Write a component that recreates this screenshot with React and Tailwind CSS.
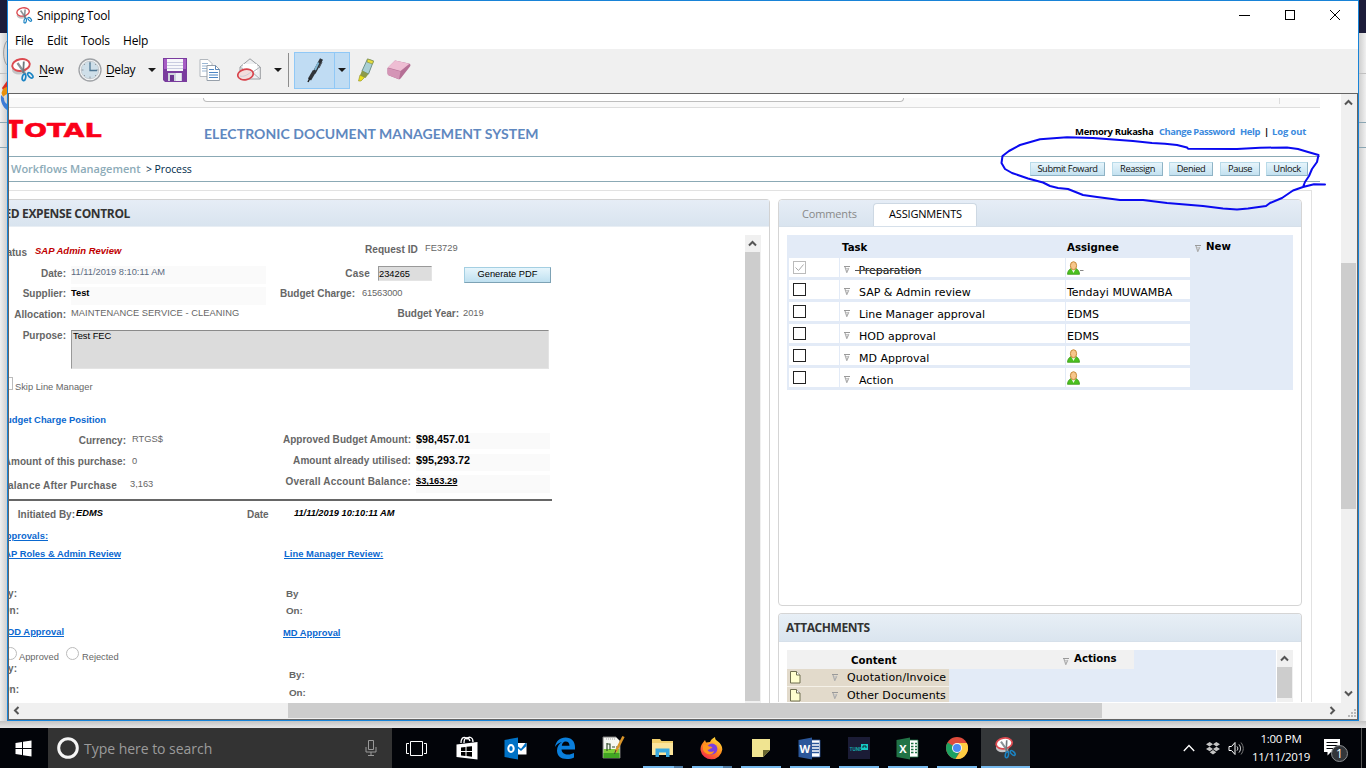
import React from "react";

const SEGOE = "font-['Open_Sans','Noto_Sans',sans-serif]";
const VERDANA = "font-['DejaVu_Sans',sans-serif]";

/* One line of text, 12px tall */
function T({ className = "", children }) {
  return <span className={`block h-3 shrink-0 whitespace-nowrap leading-3 ${className}`}>{children}</span>;
}

/* Right-aligned form label; overflows to the left */
function Label({ className = "", children }) {
  return (
    <span className={`flex h-3 shrink-0 justify-end whitespace-nowrap text-[10px] font-bold leading-3 text-[#666] ${className}`}>
      <span>{children}</span>
    </span>
  );
}

function LinkText({ className = "", children }) {
  return (
    <span className={`flex h-3 shrink-0 whitespace-nowrap text-[9.4px] font-bold leading-3 text-[#0a68d0] ${className}`}>
      <span>{children}</span>
    </span>
  );
}

function ScissorsIcon({ size, className = "" }) {
  return (
    <svg width={size} height={size} viewBox="0 0 24 24" fill="none" className={className}>
      <ellipse cx="8" cy="12" rx="7" ry="4.500" fill="#c4c4c6" />
      <ellipse cx="10" cy="7" rx="8.800" ry="5.800" fill="#fff" stroke="#dc4a50" strokeWidth="1.900" transform="rotate(-10 10 7)" />
      <path d="M6.500 5l8 11.500" stroke="#8b9297" strokeWidth="2.200" />
      <path d="M12.800 3.500L12.200 15" stroke="#6f767b" strokeWidth="1.800" />
      <ellipse cx="13" cy="19.400" rx="1.700" ry="3.300" stroke="#1b84c4" strokeWidth="1.700" transform="rotate(12 13 19.400)" />
      <ellipse cx="19.300" cy="17.400" rx="1.700" ry="3.300" stroke="#1b84c4" strokeWidth="1.700" transform="rotate(-45 19.300 17.400)" />
    </svg>
  );
}

function DropArrow({ className = "" }) {
  return (
    <svg width="8" height="4" viewBox="0 0 8 4" className={`shrink-0 ${className}`}>
      <path d="M0 0h8L4 4z" fill="#1a1a1a" />
    </svg>
  );
}

function TitleBar() {
  return (
    <div className="flex h-[29px] shrink-0 items-center bg-white">
      <ScissorsIcon size={17} className="ml-2" />
      <span className="ml-1 text-[12px] leading-4 tracking-[-0.2px] text-black">Snipping Tool</span>
      <svg width="112" height="16" viewBox="0 0 112 16" className="mb-px ml-auto mr-[13px]" fill="none" stroke="#000" shapeRendering="crispEdges">
        <path d="M6 8.500h11M52.500 3.500h9v9h-9z" />
        <path d="M97 3l10 10M107 3L97 13" shapeRendering="auto" />
      </svg>
    </div>
  );
}

function MenuBar() {
  return (
    <div className="flex h-[19px] shrink-0 bg-white pl-[7px] text-[12px] leading-[22px] tracking-[-0.2px] text-black">
      <span className="w-8">File</span>
      <span className="w-[34px]">Edit</span>
      <span className="w-[42px]">Tools</span>
      <span>Help</span>
    </div>
  );
}

function ToolBar() {
  return (
    <div className="flex h-[44px] shrink-0 items-center bg-[#f0f0f0] pb-[2px] text-[12px] leading-4 tracking-[-0.2px] text-black">
      <div className="flex w-[70px] items-center pl-[3px]">
        <ScissorsIcon size={24} />
        <span className="ml-1"><u className="underline-offset-2">N</u>ew</span>
      </div>
      <div className="flex w-[63px] items-center">
        <svg width="24" height="24" viewBox="0 0 24 24" fill="none">
          <circle cx="12" cy="12" r="11" fill="#f4f5f6" stroke="#9fa2a6" strokeWidth="1.300" />
          <circle cx="12" cy="12" r="8.800" fill="#cfdfe9" stroke="#c2c7cc" strokeWidth=".8" />
          <path d="M12 3.500v2M12 18.500v2M3.500 12h2M18.500 12h2M6 6l1 1M18 6l-1 1M6 18l1-1M18 18l-1-1" stroke="#8a939b" strokeWidth=".9" />
          <path d="M12 4.500v8h7" stroke="#4f7794" strokeWidth="1.300" />
        </svg>
        <span className="ml-1 tracking-[-0.4px]"><u className="underline-offset-2">D</u>elay</span>
      </div>
      <DropArrow className="ml-[7px]" />
      <svg width="24" height="24" viewBox="0 0 24 24" className="ml-[7px] shrink-0">
        <path d="M0 0h24v24H2l-2-2z" fill="#7a3c9e" />
        <path d="M1 1h22v10H1z" fill="#a65cc4" />
        <path d="M4 1h16v12H4z" fill="#f7f7fb" />
        <path d="M4 4.500h16M4 7.500h16M4 10.500h16" stroke="#c9cbe0" />
        <path d="M5 15h14v8H5z" fill="#cfd3dc" />
        <path d="M7 17h4v6H7z" fill="#6b3590" />
        <path d="M13 15h5v8h-5z" fill="#eef0f5" />
      </svg>
      <svg width="22" height="22" viewBox="0 0 22 22" className="ml-[12px] shrink-0" fill="none">
        <path d="M1 .5h8l4 4v13H1z" fill="#fff" stroke="#b3b8be" />
        <path d="M3 4.500h6M3 7h6M3 9.500h6M3 12h5" stroke="#9cb7d4" />
        <path d="M8 6.500h8.500l4 4v11H8z" fill="#fff" stroke="#97a0aa" />
        <path d="M16.500 6.500v4h4" stroke="#5b87b8" />
        <path d="M10 10.500h5M10 13.500h9M10 16h9M10 18.500h9" stroke="#4d86c4" />
      </svg>
      <svg width="24" height="24" viewBox="0 0 24 24" className="ml-[16px] shrink-0" fill="none">
        <path d="M3 9L13 .8 23.300 9v12H3z" fill="#eef0f2" stroke="#9a9da1" />
        <path d="M6 6h14v8H6z" fill="#fff" />
        <path d="M3 9l10 7 10-7M23 21l-8-7" stroke="#a9adb2" />
        <ellipse cx="8.500" cy="16.500" rx="7.800" ry="5.300" fill="#f3dcdc" stroke="#d8434b" strokeWidth="1.700" transform="rotate(-12 8.500 16.500)" />
        <path d="M3 18c3 1 7-.5 11-4" stroke="#c9cdd6" />
      </svg>
      <DropArrow className="ml-[13px]" />
      <div className="ml-[6px] h-[34px] w-px shrink-0 bg-[#8d8d8d]" />
      <div className="ml-[5px] flex h-[37px] w-14 shrink-0 border border-[#90c8f6] bg-[#c0dcf3]">
        <div className="flex w-10 items-center justify-center border-r border-[#90c8f6]">
          <svg width="18" height="26" viewBox="0 0 18 26" fill="none">
            <path d="M15.500 2L8 16" stroke="#2b3036" strokeWidth="3.400" />
            <path d="M12.500 5.500L9 13" stroke="#7fb3cf" strokeWidth="2" />
            <path d="M8.500 14L3.500 22.500" stroke="#30353a" strokeWidth="3.600" />
            <path d="M4 21l-2 4" stroke="#222" strokeWidth="1.500" />
            <path d="M16 5l-3 6" stroke="#45494d" />
          </svg>
        </div>
        <div className="flex flex-1 items-center justify-center"><DropArrow /></div>
      </div>
      <svg width="18" height="26" viewBox="0 0 18 26" className="ml-[7px] shrink-0" fill="none">
        <path d="M10.500 2L16.500 4l-5 13L5 14z" fill="#a9cfd4" stroke="#6d918b" />
        <path d="M10.500 2L16.500 4l-1 3-5.500-2z" fill="#e7de3d" stroke="#8f9a4c" strokeWidth=".8" />
        <path d="M5 13.500l6.500 3.500-3 4-5.500-2.500z" fill="#8c9b4a" />
        <path d="M3 18l4.500 2.500L4 24H1.500z" fill="#e9e11d" stroke="#8d8a22" strokeWidth=".6" />
      </svg>
      <svg width="24" height="20" viewBox="0 0 24 20" className="ml-[12px] shrink-0">
        <path d="M8 .5L22 3.500c1.500.5 2 1.500 1 3L14 18c-1 1.500-2 1.500-3 1L2 15.500C.8 15 .5 14 .5 12.500V8z" fill="#b56f95" />
        <path d="M8 .5L22.500 3.800 13.500 11 .8 7.500z" fill="#eebdd3" />
        <path d="M.5 8l13 3.500-1.500 7.800L1.500 15.200C.5 14.500.5 13 .5 12z" fill="#d495b6" />
      </svg>
    </div>
  );
}

function Chevron({ dir = "up", className = "" }) {
  const d = { up: "M1 6.500l3.500-3.500L8 6.500", down: "M1 2.500L4.500 6 8 2.500", left: "M6.500 1L3 4.500 6.500 8", right: "M2.500 1L6 4.500 2.500 8" }[dir];
  return (
    <svg width="9" height="9" viewBox="0 0 9 9" className={`shrink-0 ${className}`} fill="none">
      <path d={d} stroke="#555" strokeWidth="2" />
    </svg>
  );
}

function PageButton({ className = "", children }) {
  return (
    <span className={`flex h-[14px] shrink-0 items-center justify-center whitespace-nowrap border border-[#b9dbe9] border-b-[#8fb3c5] border-r-[#8fb3c5] bg-gradient-to-b from-[#e6f4fb] to-[#c3e1f0] text-[9.300px] leading-3 tracking-[-0.4px] text-[#111] ${className}`}>
      {children}
    </span>
  );
}

function Header() {
  return (
    <>
      <div className="mt-1 flex h-[10px] w-[1311px] shrink-0 border-b border-[#ddd] bg-[#f9f9f9]">
        <div className="ml-[194px] h-1 w-[701px] rounded-b-sm border-x border-b border-[#bdbdbd] bg-white" />
        <div className="ml-[375px] h-[6px] w-px bg-[#ddd]" />
      </div>
      <div className={`flex h-[49px] w-[1311px] shrink-0 border-b border-[#8ba9b5] ${SEGOE}`}>
        <div className="flex h-8 w-[195px] overflow-hidden font-['DejaVu_Sans',sans-serif] font-bold text-[#fa0019] [-webkit-text-stroke:0.5px_#fa0019]">
          <span className="-ml-[3px] mt-[9px] w-[18px] text-[25px] leading-[26px]">T</span>
          <span className="mt-[11px] origin-left scale-x-[1.38] text-[19.700px] leading-[24px]">OTAL</span>
        </div>
        <span className="mt-[18px] whitespace-nowrap font-['Lato',sans-serif] text-[14px] font-bold leading-[16px] tracking-[0.07px] text-[#5f88c0]">
          ELECTRONIC DOCUMENT MANAGEMENT SYSTEM
        </span>
        <div className="ml-auto mr-[14px] flex text-[9.400px] font-bold tracking-[-0.32px] text-[#3b8ade]">
          <T className="mt-[18px] w-[84px] text-[9.500px] text-black">Memory Rukasha</T>
          <T className="mt-[18px] w-[81px] tracking-[-0.42px]">Change Password</T>
          <T className="mt-[18px] w-[24px]">Help</T>
          <T className="mt-[18px] w-[8px] text-black">|</T>
          <T className="mt-[18px] w-[34px] tracking-[-0.1px]">Log out</T>
        </div>
      </div>
      <div className={`flex h-[25px] w-[1311px] shrink-0 items-center border-b border-[#8ba9b5] ${SEGOE}`}>
        <T className="ml-[2px] w-[135px] text-[11px] font-semibold text-[#8cabb8]">Workflows Management</T>
        <T className="text-[10.500px] tracking-[-0.1px] text-[#002a4a]">&gt; Process</T>
        <div className="ml-auto mr-[12px] flex">
          <PageButton className="mr-[7px] w-[75px]">Submit Foward</PageButton>
          <PageButton className="mr-[6px] w-[51px]">Reassign</PageButton>
          <PageButton className="mr-[7px] w-[44px]">Denied</PageButton>
          <PageButton className="mr-[6px] w-[40px]">Pause</PageButton>
          <PageButton className="w-[42px]">Unlock</PageButton>
        </div>
      </div>
    </>
  );
}

function ExpenseForm() {
  const link = "underline underline-offset-1";
  return (
    <div className="flex w-[736px] flex-col overflow-hidden pt-[14px] font-['Liberation_Sans',Arial,sans-serif] text-[9.300px] text-[#666]">
      <div className="flex h-[25px] shrink-0">
        <Label className="mt-[6px] w-[18px]">Status</Label>
        <T className="ml-2 mt-[4px] w-[330px] text-[9.500px] font-bold italic text-[#c00000]">SAP Admin Review</T>
        <T className="mt-[3px] w-[60px] text-[10.100px] font-bold">Request ID</T>
        <T className="mt-[1px]">FE3729</T>
      </div>
      <div className="flex h-[21px] shrink-0">
        <Label className="mt-[2px] w-[57px]">Date:</Label>
        <div className="ml-[5px] h-[18px] w-[195px] bg-[#fafafa]"><T className="text-[#5d6b80]">11/11/2019 8:10:11 AM</T></div>
        <Label className="mt-[2px] w-[104px] tracking-[0.2px]">Case</Label>
        <div className="ml-2 h-[15px] w-[54px] border border-[#e4e4e4] border-l-[#999] border-t-[#999] bg-[#ddd]"><T className="mt-px text-black">234265</T></div>
        <span className="ml-8 mt-px flex h-4 w-[87px] items-center justify-center whitespace-nowrap border border-[#a4cfe2] border-b-[#7da2b5] border-r-[#7da2b5] bg-gradient-to-b from-[#e6f5fc] to-[#bfe0f0] text-[9.300px] text-black">Generate PDF</span>
      </div>
      <div className="flex h-5 shrink-0">
        <Label className="mt-px w-[57px]">Supplier:</Label>
        <div className="ml-[5px] h-[18px] w-[195px] bg-[#fafafa]"><T className="font-bold text-black">Test</T></div>
        <Label className="mt-px w-[89px]">Budget Charge:</Label>
        <T className="ml-[7px] tracking-[-0.13px]">61563000</T>
      </div>
      <div className="flex h-[23px] shrink-0">
        <Label className="mt-[2px] w-[57px]">Allocation:</Label>
        <T className="ml-[5px] w-[198px] tracking-[0.05px]">MAINTENANCE SERVICE - CLEANING</T>
        <Label className="mt-px w-[190px]">Budget Year:</Label>
        <T className="ml-1">2019</T>
      </div>
      <div className="flex h-[47px] shrink-0">
        <Label className="w-[57px]">Purpose:</Label>
        <div className="ml-[5px] h-[39px] w-[478px] border border-[#e4e4e4] border-l-[#999] border-t-[#8a8a8a] bg-[#dcdcdc] pl-px text-black"><T className="-mt-px">Test FEC</T></div>
      </div>
      <div className="flex h-[35px] shrink-0">
        <div className="h-[13px] w-[4px] border border-l-0 border-[#bbb]" />
        <T className="ml-[2px] mt-[4px]">Skip Line Manager</T>
      </div>
      <div className="flex h-[21px] shrink-0">
        <LinkText className="mt-[2px] w-[97px] justify-end">Budget Charge Position</LinkText>
      </div>
      <div className="flex h-[21px] shrink-0">
        <Label className="mt-[2px] w-[117px]">Currency:</Label>
        <T className="ml-[6px] w-[150px]">RTGS$</T>
        <Label className="mt-px w-[129px] tracking-[0.03px]">Approved Budget Amount:</Label>
        <div className="ml-[5px] h-4 w-[134px] bg-[#fafafa]"><T className="text-[10.800px] font-bold text-black">$98,457.01</T></div>
      </div>
      <div className="flex h-[21px] shrink-0">
        <Label className="mt-[2px] w-[117px] tracking-[0.05px]">Amount of this purchase:</Label>
        <T className="ml-[6px] mt-px w-[150px]">0</T>
        <Label className="mt-px w-[129px] tracking-[0.05px]">Amount already utilised:</Label>
        <div className="ml-[5px] h-[17px] w-[134px] bg-[#fafafa]"><T className="text-[10.800px] font-bold text-black">$95,293.72</T></div>
      </div>
      <div className="flex h-6 shrink-0">
        <Label className="mt-[5px] w-[108px] tracking-[0.2px]">Balance After Purchase</Label>
        <T className="ml-[13px] mt-[3px] w-[152px]">3,163</T>
        <Label className="mt-px w-[129px] tracking-[0.2px]">Overall Account Balance:</Label>
        <div className="ml-[5px] h-[18px] w-[134px] bg-[#fafafa]"><T className={`text-[9.300px] font-bold text-black ${link}`}>$3,163.29</T></div>
      </div>
      <div className="h-[2px] w-[543px] shrink-0 bg-[#666]" />
      <div className="flex h-[29px] shrink-0">
        <Label className="mt-[8px] w-[66px]">Initiated By:</Label>
        <T className="ml-px mt-[6px] w-[171px] font-bold italic text-black">EDMS</T>
        <T className="mt-[8px] w-[47px] text-[10px] font-bold">Date</T>
        <T className="mt-[6px] text-[9.250px] font-bold italic text-black">11/11/2019 10:10:11 AM</T>
      </div>
      <div className="flex h-[18px] shrink-0">
        <LinkText className={`w-[39px] justify-end ${link}`}>Approvals:</LinkText>
      </div>
      <div className="flex h-10 shrink-0">
        <LinkText className={`w-[112px] justify-end ${link}`}>SAP Roles &amp; Admin Review</LinkText>
        <LinkText className={`ml-[163px] tracking-[0.04px] ${link}`}>Line Manager Review:</LinkText>
      </div>
      <div className="flex h-[17px] shrink-0">
        <Label className="w-2">By:</Label>
        <T className="ml-[269px] text-[9.800px] font-bold">By</T>
      </div>
      <div className="flex h-[21px] shrink-0">
        <Label className="w-[10px]">On:</Label>
        <T className="ml-[267px] text-[9.800px] font-bold">On:</T>
      </div>
      <div className="flex h-[22px] shrink-0">
        <LinkText className={`w-[55px] justify-end ${link}`}>HOD Approval</LinkText>
        <LinkText className={`ml-[219px] mt-px ${link}`}>MD Approval</LinkText>
      </div>
      <div className="flex h-[15px] shrink-0">
        <span className="-mt-px flex h-[13px] w-2 justify-end"><span className="size-[13px] shrink-0 rounded-full border border-[#bbb]" /></span>
        <T className="ml-[2px] mt-[3px] w-[47px]">Approved</T>
        <span className="-mt-px size-[13px] rounded-full border border-[#bbb]" />
        <T className="ml-[3px] mt-[3px]">Rejected</T>
      </div>
      <div className="flex h-[21px] shrink-0">
        <Label className="w-2">By:</Label>
        <T className="ml-[272px] mt-[6px] text-[9.800px] font-bold">By:</T>
      </div>
      <div className="flex h-[18px] shrink-0">
        <Label className="w-[10px]">On:</Label>
        <T className="ml-[270px] mt-[3px] text-[9.800px] font-bold">On:</T>
      </div>
    </div>
  );
}

function Funnel({ className = "" }) {
  return (
    <svg width="7" height="7" viewBox="0 0 7 7" className={`shrink-0 ${className}`} fill="none">
      <path d="M0 .5h6" stroke="#999" />
      <path d="M1 1l1.800 5.500L4.800 2" stroke="#adadad" strokeWidth="1.200" />
      <path d="M2 2.500h2.500" stroke="#c6c6c6" />
    </svg>
  );
}

function Person() {
  return (
    <svg width="13" height="14" viewBox="0 0 13 14" className="ml-px">
      <path d="M.5 13.300C.5 10.500 2 8.500 4 7.500h5c2 1 3.500 3 3.500 5.800z" fill="#4cc01f" stroke="#3a9a17" strokeWidth=".8" />
      <path d="M4.500 8h4l-2 4z" fill="#f4f7ee" />
      <ellipse cx="6.500" cy="4.700" rx="3.100" ry="4" fill="#f7c68b" stroke="#c58a3a" strokeWidth="1" />
    </svg>
  );
}

const tasks = [
  { name: "Preparation", done: true, person: true },
  { name: "SAP & Admin review", who: "Tendayi MUWAMBA" },
  { name: "Line Manager approval", who: "EDMS" },
  { name: "HOD approval", who: "EDMS" },
  { name: "MD Approval", person: true },
  { name: "Action", person: true },
];

function Assignments() {
  return (
    <section className="h-[407px] w-[524px] shrink-0 rounded-t rounded-b border border-[#d5d5d5] bg-white">
      <div className={`flex h-[27px] items-end rounded-t border-b border-[#d6e0ea] bg-gradient-to-b from-[#e6edf6] to-[#d9e4ef] ${SEGOE}`}>
        <T className="mb-[6px] w-[94px] pl-[23px] text-[11px] tracking-[-0.15px] text-[#888]">Comments</T>
        <div className="h-[23px] w-[104px] rounded-t-sm border border-b-0 border-[#cdd8e3] bg-white pl-[15px] pt-[4px]">
          <T className="text-[11px] tracking-[-0.17px] text-black">ASSIGNMENTS</T>
        </div>
      </div>
      <div className={`ml-2 mt-2 h-[155px] w-[506px] bg-[#e3ebf7] pl-[2px] text-[11px] text-black ${VERDANA}`}>
        <div className="flex h-[23px] text-[10.200px] font-bold">
          <T className="ml-[53px] mt-[7px] w-[225px]">Task</T>
          <T className="mt-[7px] w-[128px]">Assignee</T>
          <Funnel className="mt-[10px]" />
          <T className="ml-1 mt-[6px]">New</T>
        </div>
        {tasks.map((t) => (
          <div key={t.name} className="flex h-[22px]">
            <div className="h-[19px] w-[50px] bg-white pl-1 pt-[3px]">
              <div className={`size-[13px] border ${t.done ? "border-[#bbb]" : "border-[#222]"}`}>
                {t.done && (
                  <svg width="11" height="11" viewBox="0 0 11 11" fill="none"><path d="M1.500 5.500l3 3 5-6" stroke="#aaa" /></svg>
                )}
              </div>
            </div>
            <div className="ml-px flex h-[19px] w-[225px] bg-white pl-1">
              <Funnel className="mt-[8px]" />
              {t.done ? <T className="ml-1 mt-[7px] whitespace-pre text-[10.900px] line-through decoration-[#555]">{" Preparation"}</T> : <T className="ml-2 mt-[7px]">{t.name}</T>}
            </div>
            <div className="ml-px flex h-[19px] w-[124px] bg-white">
              {t.person ? <div className="pt-[3px]"><Person /></div> : <T className="ml-px mt-[7px]">{t.who}</T>}
              {t.done && <T className="mt-[7px] whitespace-pre line-through decoration-[#888]">{" "}</T>}
            </div>
          </div>
        ))}
      </div>
    </section>
  );
}

function FileIcon() {
  return (
    <svg width="11" height="13" viewBox="0 0 11 13" className="ml-[3px] shrink-0">
      <path d="M.5.5h6l3.500 3.500v8H.5z" fill="#ffffcf" stroke="#6f6f50" />
      <path d="M6.500.5V4H10" fill="#fff" stroke="#6f6f50" />
    </svg>
  );
}

function Attachments() {
  return (
    <section className="mt-[7px] h-[89px] w-[524px] shrink-0 overflow-hidden rounded-t border border-b-0 border-[#d5d5d5] bg-white">
      <div className={`h-[28px] border-b border-[#d6e0ea] bg-gradient-to-b from-[#e8eff6] to-[#dae5ef] pl-[7px] pt-2 ${SEGOE}`}>
        <T className="text-[12px] font-bold tracking-[-0.46px] text-[#333]">ATTACHMENTS</T>
      </div>
      <div className={`ml-2 mt-2 flex w-[506px] text-black ${VERDANA}`}>
        <div className="h-[52px] w-[489px] overflow-hidden bg-[#e3ebf7]">
          <div className="flex h-[19px] w-[347px] bg-[#f1f1f1] text-[10.200px] font-bold">
            <T className="ml-[64px] mt-[5px] w-[212px]">Content</T>
            <Funnel className="mt-[8px]" />
            <T className="ml-1 mt-[3px]">Actions</T>
          </div>
          {["Quotation/Invoice", "Other Documents"].map((n) => (
            <div key={n} className="flex h-[18px] w-[162px] items-center border-b border-[#f5f1e8] bg-[#e2dacb] text-[11px] tracking-[0.1px]">
              <FileIcon />
              <Funnel className="ml-[31px]" />
              <T className="ml-[8px] mt-px">{n}</T>
            </div>
          ))}
        </div>
        <div className="ml-px h-[52px] w-4 bg-[#f0f0f0] pt-1">
          <Chevron className="ml-[3px]" />
          <div className="mt-1 h-[31px] w-[15px] bg-[#cdcdcd]" />
        </div>
      </div>
    </section>
  );
}

function Page() {
  return (
    <div className="flex h-[609px] w-[1332px] shrink-0 flex-col overflow-hidden bg-white">
      <Header />
      <div className="mt-2 flex h-[512px] w-[1303px] shrink-0 border-r border-t border-[#e2e2e2] pt-2">
        <section className="h-[505px] w-[761px] shrink-0 rounded-tr border-r border-t border-[#d2d2d2]">
          <div className={`flex h-[27px] w-[760px] overflow-hidden border-b border-[#e8eef4] bg-gradient-to-b from-[#e6edf6] to-[#d9e4ef] ${SEGOE}`}>
            <span className="mt-[8px] flex h-3 w-[121px] justify-end whitespace-nowrap text-[12px] font-bold leading-3 tracking-[-0.36px] text-[#333]">
              <span>UNBUDGETED EXPENSE CONTROL</span>
            </span>
          </div>
          <div className="flex h-[477px]">
            <ExpenseForm />
            <div className="mt-[8px] w-4 bg-[#f0f0f0] pt-1">
              <Chevron className="ml-[3px]" />
              <div className="mt-1 h-[449px] w-[15px] bg-[#cdcdcd]" />
            </div>
          </div>
        </section>
        <div className="ml-[8px] flex flex-col">
          <Assignments />
          <Attachments />
        </div>
      </div>
    </div>
  );
}

function SnippingWindow() {
  return (
    <div className={`flex h-[721px] w-[1352px] shrink-0 flex-col border border-[#1883d7] bg-white ${SEGOE}`}>
      <TitleBar />
      <MenuBar />
      <ToolBar />
      <div className="flex flex-1 flex-col border border-[#646464]">
        <div className="flex h-[609px]">
          <Page />
          <div className="flex w-4 flex-col items-start bg-[#f0f0f0]">
            <Chevron className="ml-[3px] mt-[4px]" />
            <div className="mt-[156px] h-[246px] w-[15px] bg-[#cdcdcd]" />
            <Chevron dir="down" className="mb-[5px] ml-[3px] mt-auto" />
          </div>
        </div>
        <div className="flex h-4 items-start bg-[#f0f0f0]">
          <Chevron dir="left" className="ml-[3px] mt-[3px]" />
          <div className="ml-[267px] h-[15px] w-[814px] bg-[#cdcdcd]" />
          <Chevron dir="right" className="ml-auto mt-[3px]" />
          <svg width="10" height="10" viewBox="0 0 10 10" className="ml-[10px] mt-[5px]" fill="#b8b8b8">
            <path d="M7 1h2v2H7zM4 4h2v2H4zM7 4h2v2H7zM1 7h2v2H1zM4 7h2v2H4zM7 7h2v2H7z" />
          </svg>
        </div>
      </div>
    </div>
  );
}

function SideStrip({ side }) {
  const left = side === "left";
  return (
    <div className="h-[721px] w-[7px] shrink-0">
      <svg width="7" height="721" viewBox="0 0 7 721" fill="none">
        <defs>
          <linearGradient id={`edge-${side}`} x1={left ? "0" : "1"} x2={left ? "1" : "0"} y1="0" y2="0">
            <stop offset="0" stopColor="#f0f0f0" />
            <stop offset="1" stopColor="#cfcfcf" />
          </linearGradient>
        </defs>
        <path d="M0 0h7v721H0z" fill={`url(#edge-${side})`} />
        <path d="M0 0h7v33H0z" fill="#1d1d3a" />
        <path d="M0 73.500h7" stroke="#c0c0c0" />
        <path d="M0 122.500h7M0 147.500h7" stroke="#8aa5b2" />
        {left && (
          <>
            <path d="M7 41C2.500 45 2.500 61 7 65" stroke="#9a9a9a" />
            <path d="M2 88l5-7v7l-4 2z" fill="#d93025" />
            <path d="M1.500 93c1-4 3-6 5.500-6v7c-2 1-3 2-4 3z" fill="#e8900c" />
            <path d="M1 95l3 3c0 3 1 5 3 6v6C3 107 0 102 1 95z" fill="#3f7dd6" />
          </>
        )}
      </svg>
    </div>
  );
}

function AppSlot({ children, running, grouped, active }) {
  return (
    <div className={`flex h-10 w-[49px] shrink-0 flex-col items-center justify-between ${active ? "bg-[#343739]" : ""}`}>
      <div className="flex h-[38px] items-center pt-[2px]">{children}</div>
      {running && (
        <div className={`flex h-[2px] ${active ? "w-[49px]" : "w-10"} bg-[#76b9ed]`}>
          {grouped && <div className="ml-auto w-[9px] bg-[#4f7ba3]" />}
        </div>
      )}
    </div>
  );
}

function OfficeTile({ dark, light, letter, children }) {
  return (
    <svg width="23" height="23" viewBox="0 0 23 23">
      <path d="M12 3h10v17H12z" fill="#fff" stroke={light} strokeWidth=".8" />
      {children}
      <path d="M.5 3L14 .5v22L.5 20z" fill={dark} />
      <text x="6.800" y="16" textAnchor="middle" fontSize="11" fontWeight="700" fontFamily="Open Sans" fill="#fff">{letter}</text>
    </svg>
  );
}

function TaskBar() {
  return (
    <div className={`flex h-10 w-[1366px] shrink-0 bg-[#020409] ${SEGOE}`}>
      <div className="flex w-12 items-center justify-center pr-[2px]">
        <svg width="17" height="17" viewBox="0 0 17 17" fill="#fff"><path d="M.5 3L7 2v6H.5zM8 1.800L16.500.5V8H8zM.5 9H7v6L.5 14zM8 9h8.500v7.500L8 15.200z" /></svg>
      </div>
      <div className="flex w-[344px] items-center bg-[#333]">
        <svg width="24" height="24" viewBox="0 0 24 24" className="ml-2" fill="none"><circle cx="12" cy="12" r="9.300" stroke="#f5f5f5" strokeWidth="3" /></svg>
        <span className="ml-1 mt-px text-[14px] leading-5 tracking-[-0.03px] text-[#9b9b9b]">Type here to search</span>
        <svg width="12" height="18" viewBox="0 0 12 18" className="ml-auto mr-[15px]" fill="none" stroke="#9a9a9a">
          <path d="M3.500 1.500h5v9h-5zM1 8v5h10V8M6 13v3.500M3 16.500h6" />
        </svg>
      </div>
      <div className="flex pl-px">
        <AppSlot>
          <svg width="21" height="15" viewBox="0 0 21 15" className="mr-[3px]" fill="none" stroke="#fff"><path d="M4.500.5h12v14h-12zM3 2.500H.5v10H3M18 2.500h2.500v10H18" /></svg>
        </AppSlot>
        <AppSlot>
          <svg width="22" height="24" viewBox="0 0 22 24">
            <path d="M5 7C5 1 9 0 11 3c2-3 6-2 6 3M8 7c0-6 4-7 6-2" fill="none" stroke="#fff" strokeWidth="1.300" />
            <path d="M.5 8.500L21.500 6v17.500L.5 21z" fill="#fff" />
            <path d="M5 11.500l4.500-.5v4H5zM10.500 10.800l5.500-.6V15h-5.500zM5 16h4.500v4L5 19.500zM10.500 16H16v4.800l-5.500-.7z" fill="#000" />
          </svg>
        </AppSlot>
        <AppSlot>
          <svg width="23" height="23" viewBox="0 0 23 23">
            <path d="M12 6h10.500v11.500H12z" fill="#fff" />
            <path d="M22.500 6v3l-5.500 5-4-3.500 1-1 3 2.300L21.500 6z" fill="#0072c6" />
            <path d="M.5 3L14 .5v22L.5 20z" fill="#0072c6" />
            <ellipse cx="7" cy="11.500" rx="2.700" ry="3.500" fill="none" stroke="#fff" strokeWidth="2" />
          </svg>
        </AppSlot>
        <AppSlot>
          <svg width="22" height="22" viewBox="0 0 22 22">
            <path d="M1 10C2 4 6 .5 11.500.5c6 0 9.500 4 9.500 9.500v2.500H7.500c.3 3.500 3 5 6.500 5 2.300 0 4.300-.6 6-1.500v4.500c-2 1-4.500 1.500-7 1.500-6.500 0-10-3.500-10-8.500 0-4 2-6.800 5-8.500-3 .7-5.500 2.500-7 5zM7.800 8.800h7.700c0-2.800-1.500-4.300-3.800-4.300-2.200 0-3.600 1.700-3.900 4.300z" fill="#0a7fdc" fillRule="evenodd" />
          </svg>
        </AppSlot>
        <AppSlot>
          <svg width="23" height="24" viewBox="0 0 23 24" className="mb-[2px]">
            <path d="M1 2h13l4 4v17H1z" fill="#f6f7f2" stroke="#777" />
            <path d="M1.500 14h16v9h-16z" fill="#7fcf3b" />
            <path d="M1.500 18h16v5h-16z" fill="#41a523" />
            <path d="M5 8v8M5 9h3v6M10 12h3M14 12h3" stroke="#314b2b" strokeWidth="1.200" fill="none" />
            <path d="M4 4h9" stroke="#a5a5a5" strokeDasharray="1 1" />
            <path d="M21.500 1.500L13.500 17" stroke="#d9952a" strokeWidth="2.600" />
            <path d="M14 15l-1.500 4" stroke="#443" />
          </svg>
        </AppSlot>
        <AppSlot running grouped>
          <svg width="23" height="20" viewBox="0 0 23 20">
            <path d="M1 1h8l1.500 2H22v14H1z" fill="#f1cf6c" />
            <path d="M1 5h21v12H1z" fill="#fbe49b" />
            <path d="M4.500 19V10.500h14V19H15v-4.500H8V19z" fill="#39a9e0" />
          </svg>
        </AppSlot>
        <AppSlot running grouped>
          <svg width="23" height="23" viewBox="0 0 23 23">
            <defs>
              <linearGradient id="fox" x1=".8" y1="0" x2=".2" y2="1"><stop offset="0" stopColor="#ffe43d" /><stop offset=".5" stopColor="#ff8a1e" /><stop offset="1" stopColor="#f5214f" /></linearGradient>
            </defs>
            <path d="M2 7l3-4 1 2.500 4-.5c1-2 2-3.500 5-5 0 2.500 1 3 3 4.500 2.500 2 4.300 4.500 4.300 8A11 11 0 0 1 .5 13C.5 10 1 8.500 2 7z" fill="url(#fox)" />
            <circle cx="12" cy="12" r="5.400" fill="#7a3fe0" />
            <path d="M3 8c2-1 5 0 6 1.500 2-.3 3 .5 3.500 1.500-2 0-2.500 1.500-5 2 1 2 4 2.500 6.500 1 0 4-8 5-11-1z" fill="#ff961f" />
          </svg>
        </AppSlot>
        <AppSlot running>
          <svg width="18" height="18" viewBox="0 0 18 18"><path d="M0 0h18v11l-7 7H0z" fill="#f0e491" /><path d="M18 11l-7 7v-7z" fill="#69662e" /></svg>
        </AppSlot>
        <AppSlot running>
          <OfficeTile dark="#2b579a" light="#2b579a" letter="W"><path d="M14 6.500h7M14 9.500h7M14 12.500h7M14 15.500h7" stroke="#2b579a" strokeWidth="1.300" /></OfficeTile>
        </AppSlot>
        <AppSlot running>
          <svg width="22" height="22" viewBox="0 0 22 22">
            <path d="M0 0h22v22H0z" fill="#1b1c36" />
            <path d="M13 7h7v6h-7z" fill="#15c9c4" />
            <path d="M15 11V9h3v2" stroke="#123" fill="none" />
            <text x="1.500" y="13.500" fontSize="4.500" fontWeight="700" fontFamily="Inter" fill="#16a9a8">TUNE</text>
          </svg>
        </AppSlot>
        <AppSlot running>
          <OfficeTile dark="#217346" light="#217346" letter="X"><path d="M15 6.500h2.500M19 6.500h2M15 9.500h2.500M19 9.500h2M15 12.500h2.500M19 12.500h2M15 15.500h2.500M19 15.500h2" stroke="#217346" strokeWidth="1.600" /></OfficeTile>
        </AppSlot>
        <AppSlot running>
          <svg width="22" height="22" viewBox="0 0 22 22">
            <circle cx="11" cy="11" r="11" fill="#de4b3c" />
            <path d="M11 11L1.500 5.500A11 11 0 0 0 9.500 21.900l5-8.900z" fill="#1da261" />
            <path d="M11 6h9.800A11 11 0 0 1 9.500 21.900L15.400 13z" fill="#ffcd42" />
            <circle cx="11" cy="11" r="5" fill="#f5f5f5" />
            <circle cx="11" cy="11" r="4" fill="#4a8af4" />
          </svg>
        </AppSlot>
        <AppSlot running active><ScissorsIcon size={22} /></AppSlot>
      </div>
      <div className="ml-auto flex items-center text-white">
        <svg width="12" height="8" viewBox="0 0 12 8" fill="none" stroke="#fff" strokeWidth="1.300"><path d="M.8 7L6 1.500 11.200 7" /></svg>
        <svg width="14" height="13" viewBox="0 0 14 13" className="ml-[11px]" fill="#c4c4c4">
          <path d="M3.700 0L7 2.200 3.500 4.400 0 2.200zM10.300 0L14 2.200l-3.500 2.200L7 2.200zM3.500 4.800L7 7 3.700 9.200 0 7zM10.500 4.800L14 7l-3.700 2.200L7 7zM7 8l3.300 2.200L7 12.500l-3.300-2.300z" />
        </svg>
        <svg width="17" height="15" viewBox="0 0 17 15" className="ml-[8px]" fill="none" stroke="#fff">
          <path d="M1 5.500h2.500l3.500-4v12l-3.500-4H1zM9 5.500c1 1 1 3 0 4M11 3.500c2 2.500 2 5.500 0 8" />
          <path d="M13 1.500c3 4 3 8 0 12" stroke="#777" />
        </svg>
        <div className="ml-[6px] flex w-[60px] flex-col items-center text-[11.500px] leading-[18px] tracking-[-0.3px]">
          <span>1:00 PM</span>
          <span>11/11/2019</span>
        </div>
        <svg width="26" height="26" viewBox="0 0 26 26" className="ml-[12px] mr-[12px] mt-[5px]">
          <path d="M1 1h16v13H8l-3.500 3.500V14H1z" fill="#fff" />
          <path d="M3.500 4.500h11M3.500 7.500h11M3.500 10.500h7" stroke="#020409" />
          <circle cx="16.500" cy="15.500" r="8" fill="#33363a" stroke="#8a8d90" />
          <text x="16.500" y="19.700" textAnchor="middle" fontSize="12" fontFamily="Open Sans" fill="#fff">1</text>
        </svg>
        <div className="mr-1 h-10 w-px bg-[#555]" />
      </div>
    </div>
  );
}

function InkScribble() {
  return (
    <svg width="1366" height="768" viewBox="0 0 1366 768" className="pointer-events-none absolute left-0 top-0" fill="none">
      <path
        d="M1325 184.500L1314 184.300 1303 187 1305 182 1309 176 1312 169 1317 162 1318.500 155 1308 152 1298 149 1287 147.500 1260 147.700 1237 149 1188 148.700 1187 147.500 1177 145 1165 143.700 1152 143 1133 141 1093 138 1067 137.300 1040 139.300 1020 145 1009 151 1002.500 156 1001.500 163 1005 169 1012 173 1028 178.500 1043 182.500 1050 186 1058 188 1068 189 1083 195 1097 197 1120 200 1143 200 1167 203 1203 206 1223 208.500 1237 209.500 1248 208.500 1266 206 1270 203 1282 198 1293 190.500 1303 187"
        stroke="#0a0af0" strokeWidth="2" strokeLinejoin="round" strokeLinecap="round"
      />
    </svg>
  );
}

export default function App() {
  return (
    <div className="relative flex h-[768px] w-[1366px] flex-col overflow-hidden">
      <div className="flex h-[721px] shrink-0">
        <SideStrip side="left" />
        <SnippingWindow />
        <SideStrip side="right" />
      </div>
      <div className="h-[7px] shrink-0 bg-gradient-to-b from-[#c4c4c4] to-[#e6e6e6]" />
      <TaskBar />
      <InkScribble />
    </div>
  );
}
